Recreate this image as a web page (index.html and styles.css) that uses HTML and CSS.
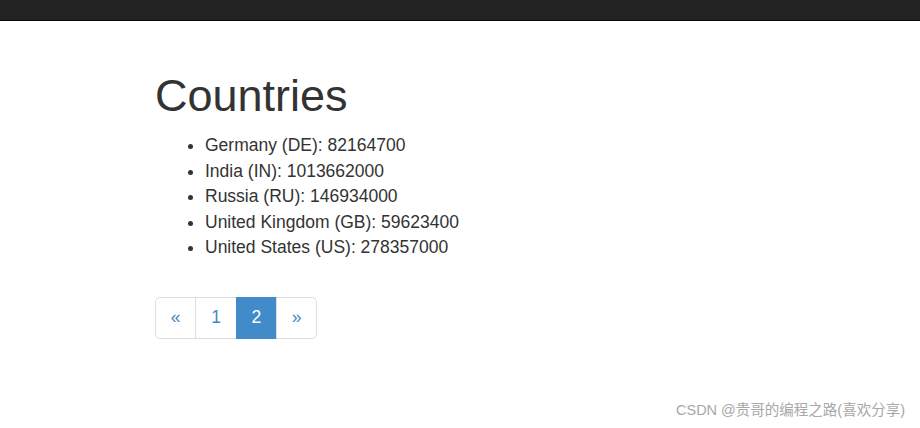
FILE: index.html
```html
<!DOCTYPE html>
<html lang="en">
<head>
  <meta charset="UTF-8">
  <title>Countries</title>
  <link rel="stylesheet" href="styles.css">
</head>
<body>

  <!-- Top navbar (scrolled, only its bottom shows) -->
  <div class="navbar"></div>

  <div class="container">
    <h1>Countries</h1>
    <ul class="countries">
      <li>Germany (DE): 82164700</li>
      <li>India (IN): 1013662000</li>
      <li>Russia (RU): 146934000</li>
      <li>United Kingdom (GB): 59623400</li>
      <li>United States (US): 278357000</li>
    </ul>

    <ul class="pagination">
      <li><a href="#">&laquo;</a></li>
      <li><a href="#">1</a></li>
      <li class="active"><a href="#">2</a></li>
      <li><a href="#">&raquo;</a></li>
    </ul>
  </div>

  <div class="watermark">CSDN @贵哥的编程之路(喜欢分享)</div>

</body>
</html>
```

FILE: styles.css
```css
* { box-sizing: border-box; }
body {
  margin: 0;
  font-family: 'Liberation Sans', Arial, sans-serif;
  font-size: 17.5px;
  line-height: 25.5px;
  color: #333;
  background: #fff;
}

.navbar {
  height: 21px;
  background: #222;
  border-bottom: 1px solid #080808;
}

.container {
  padding: 0 155px;
}

h1 {
  margin: 50px 0 12.5px;
  font-size: 45px;
  font-weight: 500;
  line-height: 49.5px;
}

.countries {
  margin: 0;
  padding-left: 50px;
}

.pagination {
  display: flex;
  margin: 36px 0 25px;
  padding: 0;
  list-style: none;
}

.pagination a {
  display: block;
  padding: 7.5px 14.8px;
  line-height: 25px;
  color: #428bca;
  text-decoration: none;
  border: 1px solid #ddd;
  margin-left: -1px;
  background: #fff;
}

.pagination li:first-child a {
  margin-left: 0;
  border-radius: 5px 0 0 5px;
}

.pagination li:last-child a { border-radius: 0 5px 5px 0; }

.pagination .active a {
  background: #428bca;
  border-color: #428bca;
  color: #fff;
}

.watermark {
  position: absolute;
  right: 15px;
  bottom: 8px;
  font-family: 'Liberation Sans', 'Noto Sans CJK SC', sans-serif;
  font-size: 14.5px;
  line-height: 20px;
  color: #a8a8a8;
}
```
